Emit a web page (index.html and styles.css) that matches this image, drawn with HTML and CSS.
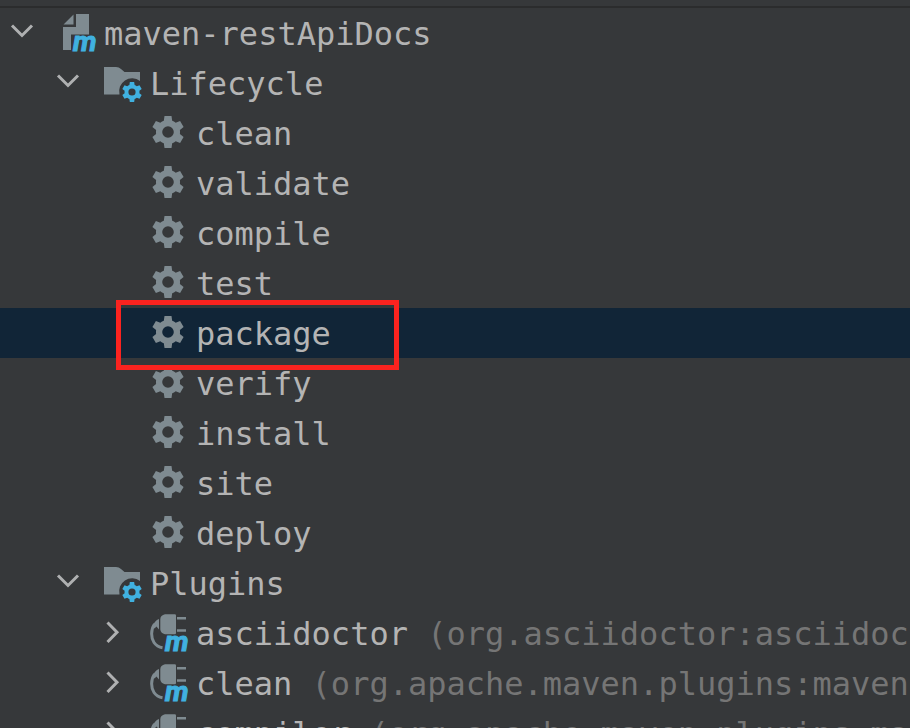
FILE: index.html
```html
<!DOCTYPE html>
<html lang="en">
<head>
<meta charset="utf-8">
<title>Maven</title>
<link rel="stylesheet" href="styles.css">
</head>
<body>
<svg class="defs" aria-hidden="true">
  <symbol id="down" viewBox="0 0 44 50"><path class="line" d="M12 17.500L22 27.500L32 17.500"/></symbol>
  <symbol id="right" viewBox="0 0 44 50"><path class="line" d="M15.500 14.500L25 24.200L15.500 34"/></symbol>
  <symbol id="project" viewBox="0 0 40 50">
    <path class="shape" d="M18 6H31V26.500H13V42H5V19H18ZM5.500 16.500L15.500 6.500V16.500Z"/>
  </symbol>
  <symbol id="folder" viewBox="0 0 40 50">
    <path class="shape" d="M0 9H12Q15 9 17 11L20.500 14H36V23A13 13 0 0 0 15.500 36.500H0Z"/>
    <g class="accent" transform="translate(28 34) scale(.62)"><use href="#cog"/></g>
  </symbol>
  <symbol id="goal" viewBox="0 0 40 50">
    <g class="shape" transform="translate(18 24)"><use href="#cog"/></g>
  </symbol>
  <symbol id="plugin" viewBox="0 0 40 50">
    <path class="shape" d="M15 6.300H24.800Q26 6.300 26 7.500V25Q26 26.300 24.800 26.300H15Q10.500 25 10.300 21.500V11Q10.500 7.500 15 6.300ZM27 9H36V11.500H27ZM27 21.300H36V23.700H27ZM9 11V21.500L6.500 18.500L4.500 20.500L2.500 18.500Q4.500 12.500 9 11Z"/>
    <path class="cord" d="M4.500 16C0.500 22 1 30 4 34.500Q7 38.800 12.500 39.800"/>
  </symbol>
  <defs>
    <path id="cog" fill-rule="evenodd" d="M-3.500 -16H3.500L4.200 -11.300Q6 -10.600 7.700 -9.300L12.100 -11L15.600 -5L11.900 -2Q12.200 0 11.900 2L15.600 5L12.100 11L7.700 9.300Q6 10.600 4.200 11.300L3.500 16H-3.500L-4.200 11.300Q-6 10.600 -7.700 9.300L-12.100 11L-15.600 5L-11.900 2Q-12.200 0 -11.900 -2L-15.600 -5L-12.100 -11L-7.700 -9.300Q-6 -10.600 -4.200 -11.300ZM0 -5.800A5.800 5.800 0 1 0 0 5.800A5.800 5.800 0 1 0 0 -5.800Z"/>
  </defs>
</svg>
<main class="panel">
  <ul class="tree" role="tree" aria-label="Maven projects">
    <li class="row" role="treeitem" aria-level="1" aria-expanded="true"><button class="toggle" aria-label="Collapse"><svg><use href="#down"/></svg></button><svg class="icon"><use href="#project"/><text class="letter" x="15" y="43">m</text></svg><span class="label">maven-restApiDocs</span></li>
    <li class="row level-2" role="treeitem" aria-level="2" aria-expanded="true"><button class="toggle" aria-label="Collapse"><svg><use href="#down"/></svg></button><svg class="icon"><use href="#folder"/></svg><span class="label">Lifecycle</span></li>
    <li class="row level-3 leaf" role="treeitem" aria-level="3"><svg class="icon"><use href="#goal"/></svg><span class="label">clean</span></li>
    <li class="row level-3 leaf" role="treeitem" aria-level="3"><svg class="icon"><use href="#goal"/></svg><span class="label">validate</span></li>
    <li class="row level-3 leaf" role="treeitem" aria-level="3"><svg class="icon"><use href="#goal"/></svg><span class="label">compile</span></li>
    <li class="row level-3 leaf" role="treeitem" aria-level="3"><svg class="icon"><use href="#goal"/></svg><span class="label">test</span></li>
    <li class="row level-3 leaf selected" role="treeitem" aria-level="3" aria-selected="true"><svg class="icon"><use href="#goal"/></svg><span class="label">package</span></li>
    <li class="row level-3 leaf" role="treeitem" aria-level="3"><svg class="icon"><use href="#goal"/></svg><span class="label">verify</span></li>
    <li class="row level-3 leaf" role="treeitem" aria-level="3"><svg class="icon"><use href="#goal"/></svg><span class="label">install</span></li>
    <li class="row level-3 leaf" role="treeitem" aria-level="3"><svg class="icon"><use href="#goal"/></svg><span class="label">site</span></li>
    <li class="row level-3 leaf" role="treeitem" aria-level="3"><svg class="icon"><use href="#goal"/></svg><span class="label">deploy</span></li>
    <li class="row level-2" role="treeitem" aria-level="2" aria-expanded="true"><button class="toggle" aria-label="Collapse"><svg><use href="#down"/></svg></button><svg class="icon"><use href="#folder"/></svg><span class="label">Plugins</span></li>
    <li class="row level-3" role="treeitem" aria-level="3" aria-expanded="false"><button class="toggle" aria-label="Expand"><svg><use href="#right"/></svg></button><svg class="icon"><use href="#plugin"/><text class="letter" x="15" y="43">m</text></svg><span class="label">asciidoctor <span class="artifact">(org.asciidoctor:asciidoct</span></span></li>
    <li class="row level-3" role="treeitem" aria-level="3" aria-expanded="false"><button class="toggle" aria-label="Expand"><svg><use href="#right"/></svg></button><svg class="icon"><use href="#plugin"/><text class="letter" x="15" y="43">m</text></svg><span class="label">clean <span class="artifact">(org.apache.maven.plugins:maven</span></span></li>
    <li class="row level-3" role="treeitem" aria-level="3" aria-expanded="false"><button class="toggle" aria-label="Expand"><svg><use href="#right"/></svg></button><svg class="icon"><use href="#plugin"/><text class="letter" x="15" y="43">m</text></svg><span class="label">compiler <span class="artifact">(org.apache.maven.plugins:ma</span></span></li>
  </ul>
</main>
</body>
</html>
```
FILE: styles.css
```css
*, *::before, *::after { box-sizing: border-box; }

body {
  margin: 0;
  background: #36383a;
  color: #b4b4b4;
  font-family: "DejaVu Sans Mono", monospace;
  font-size: 32px;
}

.defs { position: absolute; width: 0; height: 0; }

.panel {
  height: 100vh;
  overflow: hidden;
  padding-top: 6px;
}

.tree {
  margin: 0;
  padding: 0;
  list-style: none;
  border-top: 2px solid #2b2c2d;
}

.row {
  position: relative;
  display: flex;
  height: 50px;
  white-space: pre;
}

.label { line-height: 52px; }

.level-2 { padding-left: 46px; }
.level-3 { padding-left: 92px; }
.leaf.level-3 { padding-left: 136px; }

.toggle {
  flex: none;
  width: 44px;
  height: 50px;
  padding: 0;
  border: 0;
  background: none;
}

.toggle svg { display: block; width: 44px; height: 50px; }

.icon {
  flex: none;
  width: 40px;
  height: 50px;
  margin: 0 6px 0 14px;
}

.line { fill: none; stroke: #afb0b1; stroke-width: 3px; }
.shape { fill: #7f8b91; }
.cord { fill: none; stroke: #7f8b91; stroke-width: 3px; }
.accent { fill: #40b1e0; }

.letter {
  fill: #40b1e0;
  stroke: #40b1e0;
  stroke-width: 1px;
  font: italic bold 28px Roboto, sans-serif;
}

.selected { background: #112537; }

.selected::after {
  content: "";
  position: absolute;
  z-index: 1;
  top: -8px;
  left: 116px;
  width: 283px;
  height: 70px;
  border: 5px solid #fb231f;
}

.artifact { color: #757575; }
```
